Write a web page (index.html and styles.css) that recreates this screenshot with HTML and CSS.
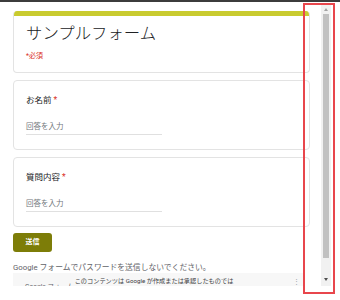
FILE: index.html
```html
<!DOCTYPE html>
<html lang="ja">
<head>
<meta charset="utf-8">
<link rel="stylesheet" href="styles.css">
</head>
<body>
<div class="topline"></div>
<div class="frame">
  <div class="viewport">
    <div class="card head">
      <div class="bar"></div>
      <div class="head-body">
        <div class="title">サンプルフォーム</div>
        <div class="req">*必須</div>
      </div>
    </div>
    <div class="card q">
      <div class="label">お名前<span class="star">*</span></div>
      <div class="input">回答を入力</div>
    </div>
    <div class="card q">
      <div class="label">質問内容<span class="star">*</span></div>
      <div class="input">回答を入力</div>
    </div>
    <div class="btn">送信</div>
    <div class="warn">Google フォームでパスワードを送信しないでください。</div>
    <div class="foot">
      <span class="logo">Google フォーム</span>
      <span class="disc">このコンテンツは Google が作成または承認したものでは</span>
      <span class="dots">⋮</span>
    </div>
  </div>
  <div class="scrollbar">
    <div class="arrow up"></div>
    <div class="thumb"></div>
    <div class="arrow down"></div>
  </div>
</div>
<div class="mark"></div>
</body>
</html>
```
FILE: styles.css
```css
html, body {
  margin: 0;
  padding: 0;
  background: #ffffff;
  font-family: Roboto, "Noto Sans CJK JP", sans-serif;
  width: 340px;
  height: 300px;
  overflow: hidden;
  position: relative;
}
.topline {
  height: 2px;
  background: #3c3c3c;
}
.frame {
  margin-top: 3px;
  width: 331px;
  height: 281px;
  display: flex;
}
.viewport {
  width: 321px;
  overflow: hidden;
  padding: 6px 0 0 13px;
  box-sizing: border-box;
}
.card {
  width: 297px;
  box-sizing: border-box;
  border: 1px solid #e3e3e3;
  border-radius: 4px;
  background: #fff;
  margin-bottom: 7px;
}
.head {
  border-top: none;
  overflow: hidden;
}
.bar {
  height: 5px;
  background: #c9cb2f;
}
.head-body {
  padding: 8px 12px 11px 12px;
}
.title {
  font-size: 16.4px;
  line-height: 20px;
  font-weight: 300;
  color: #202124;
}
.req {
  margin-top: 7px;
  font-size: 7px;
  line-height: 10px;
  color: #d93025;
}
.q {
  height: 70px;
  padding: 13px 12px 0 12px;
}
.label {
  font-size: 8.5px;
  line-height: 12px;
  color: #202124;
}
.star {
  color: #d93025;
  margin-left: 2px;
}
.input {
  margin-top: 16px;
  width: 136px;
  font-size: 7.5px;
  line-height: 10px;
  color: #70757a;
  padding-bottom: 2px;
  border-bottom: 1px solid #e0e0e0;
}
.btn {
  margin-top: -1px;
  width: 39px;
  height: 19px;
  border-radius: 3px;
  background: #7d7d08;
  color: #fff;
  font-weight: bold;
  font-size: 7px;
  line-height: 19px;
  text-align: center;
}
.warn {
  margin-top: 10px;
  font-size: 7.8px;
  line-height: 11px;
  color: #5f6368;
  white-space: nowrap;
}
.foot {
  width: 290px;
  height: 13px;
  overflow: hidden;
  background: #f7f7f7;
  display: flex;
  align-items: flex-start;
  white-space: nowrap;
}
.logo {
  margin: 9px 0 0 12px;
  font-size: 6.6px;
  line-height: 10px;
  color: #5f6368;
}
.disc {
  margin: 4px 0 0 1px;
  font-size: 6.2px;
  line-height: 8px;
  color: #3c4043;
}
.dots {
  margin: 5px 0 0 auto;
  padding-right: 3px;
  font-size: 7px;
  line-height: 8px;
  color: #9aa0a6;
}
.scrollbar {
  width: 10px;
  background: #f1f1f1;
  display: flex;
  flex-direction: column;
  align-items: center;
}
.arrow {
  width: 0;
  height: 0;
  border-left: 2.5px solid transparent;
  border-right: 2.5px solid transparent;
}
.up {
  margin-top: 3px;
  border-bottom: 3px solid #a3a3a3;
}
.thumb {
  margin-top: 3px;
  width: 6px;
  height: 244px;
  background: #c1c1c1;
}
.down {
  margin-top: 20px;
  border-top: 3px solid #505050;
}
.mark {
  position: absolute;
  left: 303px;
  top: 3px;
  width: 32px;
  height: 291px;
  box-sizing: border-box;
  border: 2px solid #e8464c;
}
```
